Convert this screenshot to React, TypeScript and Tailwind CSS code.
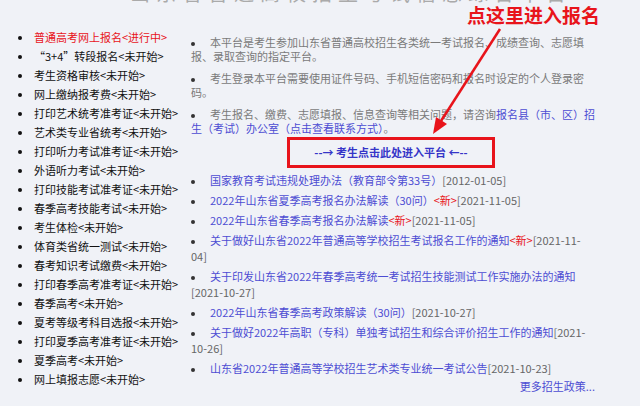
const steps = [
  { text: "普通高考网上报名<进行中>", active: true },
  { text: "“3+4”转段报名<未开始>" },
  { text: "考生资格审核<未开始>" },
  { text: "网上缴纳报考费<未开始>" },
  { text: "打印艺术统考准考证<未开始>" },
  { text: "艺术类专业省统考<未开始>" },
  { text: "打印听力考试准考证<未开始>" },
  { text: "外语听力考试<未开始>" },
  { text: "打印技能考试准考证<未开始>" },
  { text: "春季高考技能考试<未开始>" },
  { text: "考生体检<未开始>" },
  { text: "体育类省统一测试<未开始>" },
  { text: "春考知识考试缴费<未开始>" },
  { text: "打印春季高考准考证<未开始>" },
  { text: "春季高考<未开始>" },
  { text: "夏考等级考科目选报<未开始>" },
  { text: "打印夏季高考准考证<未开始>" },
  { text: "夏季高考<未开始>" },
  { text: "网上填报志愿<未开始>" },
]

interface NewsItem {
  title: string
  isNew?: boolean
  date: string[]
}

// date split where the original wraps
const news: NewsItem[] = [
  { title: "国家教育考试违规处理办法（教育部令第33号）", date: ["[2012-01-05]"] },
  { title: "2022年山东省夏季高考报名办法解读（30问）", isNew: true, date: ["[2021-11-05]"] },
  { title: "2022年山东省春季高考报名办法解读", isNew: true, date: ["[2021-11-05]"] },
  { title: "关于做好山东省2022年普通高等学校招生考试报名工作的通知", isNew: true, date: ["[2021-11-", "04]"] },
  { title: "关于印发山东省2022年春季高考统一考试招生技能测试工作实施办法的通知", date: ["", "[2021-10-27]"] },
  { title: "2022年山东省春季高考政策解读（30问）", date: ["[2021-10-27]"] },
  { title: "关于做好2022年高职（专科）单独考试招生和综合评价招生工作的通知", date: ["[2021-", "10-26]"] },
  { title: "山东省2022年普通高等学校招生艺术类专业统一考试公告", date: ["[2021-10-23]"] },
]

function Dot() {
  return (
    <span className="inline-block w-[19px] align-middle">
      <span className="block w-[4px] h-[4px] rounded-full bg-[#333]" />
    </span>
  )
}

export default function App() {
  return (
    <div
      className="relative w-[640px] h-[406px] overflow-hidden bg-[#f0f2f7]"
      style={{ fontFamily: '"Noto Sans CJK SC", "Noto Sans", sans-serif' }}
    >
      {/* page title, scrolled out of view except its last pixels */}
      <div className="relative h-[4px] overflow-hidden">
        <h1 className="absolute left-[130px] -top-[17px] text-[20px] leading-[20px] text-[#aaa] whitespace-nowrap tracking-[6px]">
          山东省普通高校招生考试信息综合平台
        </h1>
      </div>

      <div className="flex">
        {/* step list */}
        <ul className="w-[191px] shrink-0 pt-[24px]">
          {steps.map((s) => (
            <li key={s.text} className="flex items-center h-[19px] text-[11px] whitespace-nowrap">
              <span className="w-[4px] h-[4px] rounded-full bg-[#111] ml-[18px] mr-[12px]" />
              <span className={s.active ? "text-[#e8141b]" : "text-[#111]"}>{s.text}</span>
            </li>
          ))}
        </ul>

        {/* notices */}
        <div className="w-[404px] pt-[31px] text-[11px]">
          <ul className="space-y-[8px] text-[#7a7a7a] leading-[14px] whitespace-nowrap">
            <li>
              <Dot />本平台是考生参加山东省普通高校招生各类统一考试报名、成绩查询、志愿填
              <br />报、录取查询的指定平台。
            </li>
            <li>
              <Dot />考生登录本平台需要使用证件号码、手机短信密码和报名时设定的个人登录密
              <br />码。
            </li>
            <li>
              <Dot />考生报名、缴费、志愿填报、信息查询等相关问题，请咨询
              <span className="text-[#4d4dd3]">报名县（市、区）招</span>
              <br />
              <span className="text-[#4d4dd3]">生（考试）办公室（点击查看联系方式）</span>。
            </li>
          </ul>

          <div className="mt-[2px] ml-[96px] w-[208px] h-[31px] border-[3px] border-[#e8141b] flex items-center justify-center">
            <span className="text-[11px] font-bold text-[#3535c8] whitespace-nowrap">
              --→ 考生点击此处进入平台 ←--
            </span>
          </div>

          <ul className="mt-[4px] space-y-[4px] leading-[16px] whitespace-nowrap">
            {news.map((n) => (
              <li key={n.title}>
                <Dot />
                <span className="text-[#4d4dd3]">{n.title}</span>
                {n.isNew && <span className="text-[#e8141b]">&lt;新&gt;</span>}
                <span className="text-[#666]">{n.date[0]}</span>
                {n.date[1] && (
                  <>
                    <br />
                    <span className="text-[#666]">{n.date[1]}</span>
                  </>
                )}
              </li>
            ))}
          </ul>

          <div className="mt-[2px] leading-[16px] text-right text-[#4d4dd3]">更多招生政策...</div>
        </div>
      </div>

      {/* annotation */}
      <div className="absolute left-[467px] top-[5px] text-[19px] leading-[20px] font-bold text-[#e8141b] whitespace-nowrap">
        点这里进入报名
      </div>
      <svg className="absolute left-0 top-0" width="640" height="406" viewBox="0 0 640 406">
        <line x1="500" y1="29" x2="441" y2="121" stroke="#e8141b" strokeWidth="2.5" />
        <polygon points="433,134 447,124 436,117" fill="#e8141b" />
      </svg>
    </div>
  )
}
